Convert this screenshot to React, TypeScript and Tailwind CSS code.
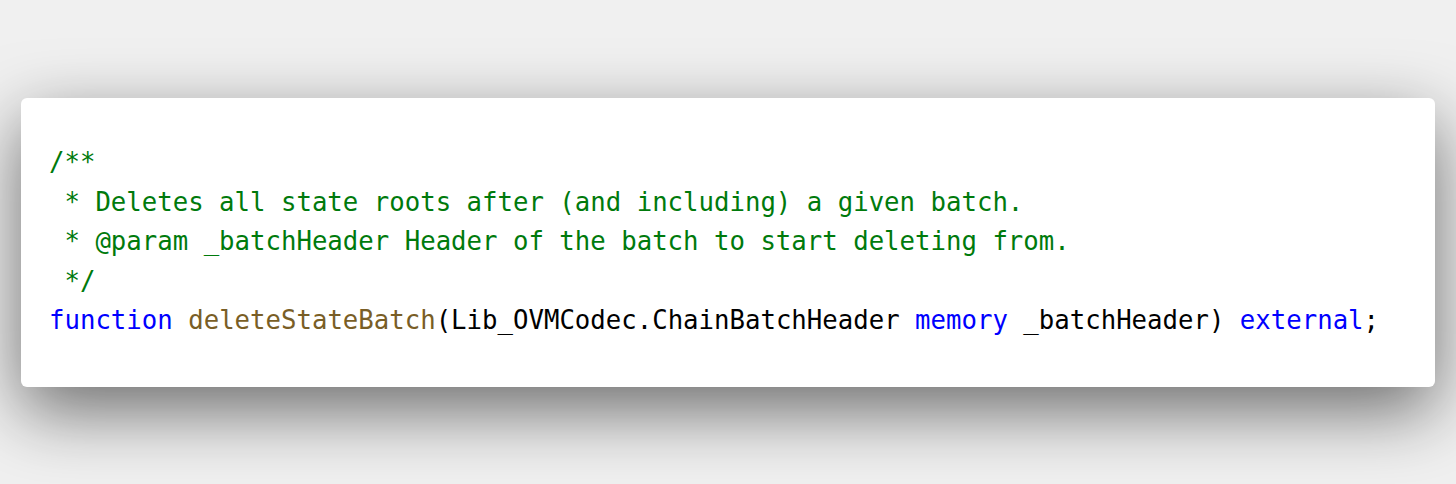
export default function App() {
  const mono = { fontFamily: '"DejaVu Sans Mono", "Liberation Mono", monospace' };
  return (
    <div className="h-[484px] w-full overflow-hidden bg-[#f0f0f0] pt-[98px] px-[21px]">
      <div
        className="h-[289px] w-[1414px] rounded-[6px] bg-white pl-[28px] pt-[45px] shadow-[0_24px_70px_rgba(0,0,0,0.55)]"
        style={mono}
      >
        <pre className="m-0 text-[25.7px] leading-[39.5px] text-black whitespace-pre" style={mono}>
          <span className="text-[#007a0c]">{"/**\n * Deletes all state roots after (and including) a given batch.\n * @param _batchHeader Header of the batch to start deleting from.\n */"}</span>
          {"\n"}
          <span className="text-[#0000ff]">function</span>{" "}
          <span className="text-[#795e26]">deleteStateBatch</span>
          {"(Lib_OVMCodec.ChainBatchHeader "}
          <span className="text-[#0000ff]">memory</span>
          {" _batchHeader) "}
          <span className="text-[#0000ff]">external</span>
          {";"}
        </pre>
      </div>
    </div>
  );
}
